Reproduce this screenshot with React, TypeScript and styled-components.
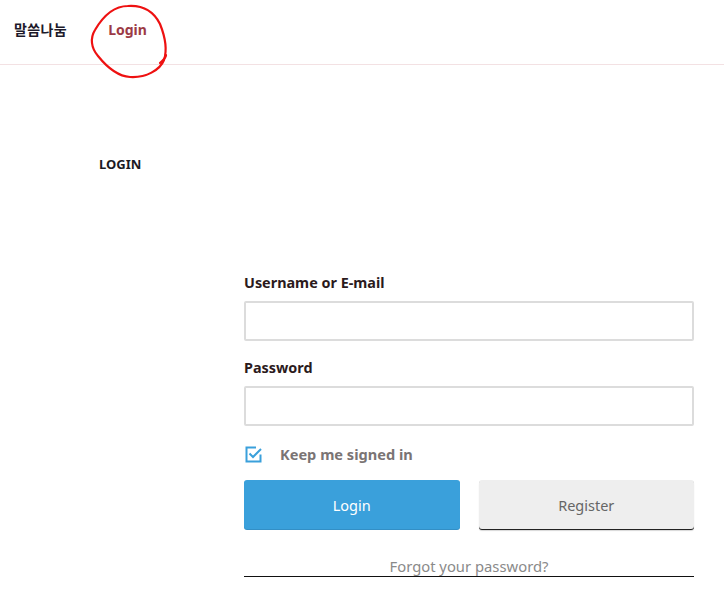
import React from "react";
import styled, { createGlobalStyle } from "styled-components";

const Global = createGlobalStyle`
  html, body { margin: 0; padding: 0; background: #fff; }
  body { font-family: "Noto Sans", "Noto Sans CJK KR", sans-serif; }
  * { box-sizing: border-box; }
`;

const Header = styled.header`
  position: relative;
  height: 65px;
  display: flex;
  align-items: center;
  padding-left: 14px;
  border-bottom: 1px solid #f3e1e3;
`;

const Brand = styled.div`
  font-family: "Noto Sans CJK KR", sans-serif;
  font-weight: 700;
  font-size: 14px;
  letter-spacing: 0.4px;
  color: #1d1a2a;
  margin-top: -6px;
`;

const NavLink = styled.a`
  margin-left: 41px;
  margin-top: -6px;
  font-weight: 700;
  font-size: 14px;
  color: #9c3a45;
  text-decoration: none;
`;

const Scribble = styled.svg`
  position: absolute;
  left: 0;
  top: 0;
  width: 200px;
  height: 90px;
  pointer-events: none;
  overflow: visible;
`;

const Main = styled.main`
  padding: 91px 0 40px;
`;

const PageTitle = styled.h1`
  margin: 0 0 0 99px;
  font-size: 13px;
  font-weight: 700;
  color: #1a1a24;
  line-height: 16px;
`;

const Form = styled.form`
  margin: 101px 0 0 244px;
  width: 450px;
  display: flex;
  flex-direction: column;
`;

const Label = styled.label`
  font-size: 14.4px;
  font-weight: 700;
  color: #2b1a1c;
  line-height: 20px;
  margin-bottom: 8px;
`;

const Input = styled.input`
  height: 40px;
  border: 2px solid #dcdcdc;
  border-radius: 2px;
  margin-bottom: 17px;
  font-size: 14px;
  padding: 0 10px;
  outline: none;
`;

const CheckRow = styled.div`
  display: flex;
  align-items: center;
  gap: 17px;
  margin-top: 1px;
  height: 20px;
`;

const CheckText = styled.span`
  font-size: 14.6px;
  font-weight: 700;
  color: #7a7474;
`;

const Buttons = styled.div`
  display: grid;
  grid-template-columns: 1fr 1fr;
  gap: 19px;
  margin-top: 16px;
`;

const Button = styled.button<{ $primary?: boolean }>`
  height: 49px;
  border: none;
  border-radius: 3px;
  font-family: inherit;
  font-size: 14.5px;
  padding-top: 2px;
  cursor: pointer;
  background: ${(p) => (p.$primary ? "#3aa0db" : "#eeeeee")};
  color: ${(p) => (p.$primary ? "#ffffff" : "#666666")};
  box-shadow: ${(p) =>
    p.$primary ? "0 1px 0 #338fc6" : "0 1px 0 #222222, 0 2px 1px #d8d8d8"};
`;

const Forgot = styled.a`
  margin-top: 27px;
  display: block;
  text-align: center;
  font-size: 14.8px;
  color: #8a8a8a;
  text-decoration: none;
  line-height: 20px;
  border-bottom: 1px solid #111;
`;

export default function App() {
  return (
    <>
      <Global />
      <Header>
        <Brand>말씀나눔</Brand>
        <NavLink href="#">Login</NavLink>
        <Scribble viewBox="0 0 200 90">
          <path
            d="M128 6 C112 6 102 18 95 30 C90 38 91 48 98 56 C106 66 116 76 130 77 C146 78 160 70 164 60 C168 48 164 34 160 24 C154 12 144 5 128 6"
            fill="none"
            stroke="#ee1111"
            strokeWidth="2.2"
            strokeLinecap="round"
          />
          <path
            d="M160 63 C163 60 166 58 166 55"
            fill="none"
            stroke="#ee1111"
            strokeWidth="2.2"
            strokeLinecap="round"
          />
        </Scribble>
      </Header>
      <Main>
        <PageTitle>LOGIN</PageTitle>
        <Form onSubmit={(e) => e.preventDefault()}>
          <Label htmlFor="user">Username or E-mail</Label>
          <Input id="user" type="text" />
          <Label htmlFor="pw">Password</Label>
          <Input id="pw" type="password" />
          <CheckRow>
            <svg width="19" height="19" viewBox="0 0 19 19">
              <path
                d="M16.5 9.5 V16.5 H2.5 V2.5 H12"
                fill="none"
                stroke="#3aa0db"
                strokeWidth="2"
              />
              <path
                d="M5.5 8.5 L9 12 L17 4"
                fill="none"
                stroke="#3aa0db"
                strokeWidth="2"
              />
            </svg>
            <CheckText>Keep me signed in</CheckText>
          </CheckRow>
          <Buttons>
            <Button $primary type="submit">Login</Button>
            <Button type="button">Register</Button>
          </Buttons>
          <Forgot href="#">Forgot your password?</Forgot>
        </Form>
      </Main>
    </>
  );
}
